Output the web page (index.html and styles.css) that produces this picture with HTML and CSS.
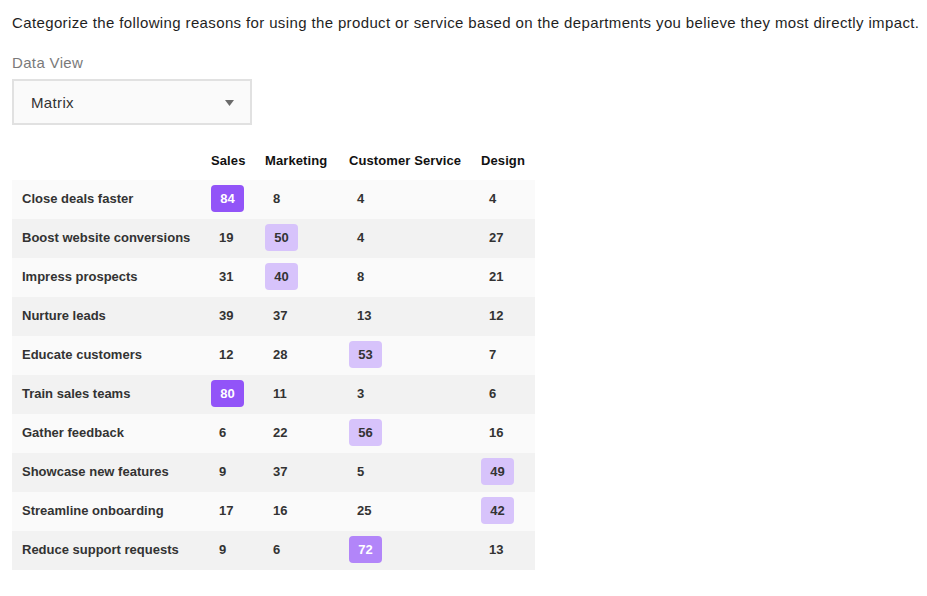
FILE: index.html
```html
<!DOCTYPE html>
<html>
<head>
<meta charset="utf-8">
<link rel="stylesheet" href="styles.css">
</head>
<body>
<div class="page">
  <p class="question">Categorize the following reasons for using the product or service based on the departments you believe they most directly impact.</p>
  <div class="field-label">Data View</div>
  <div class="select">
    <span>Matrix</span>
    <svg class="caret" width="9" height="6" viewBox="0 0 9 6"><path d="M0 0H9L4.5 6Z" fill="#6b6b6b"/></svg>
  </div>
  <div class="matrix">
    <div class="row head">
      <div class="c label"></div>
      <div class="c">Sales</div>
      <div class="c">Marketing</div>
      <div class="c">Customer Service</div>
      <div class="c">Design</div>
    </div>
    <div class="row">
      <div class="c label">Close deals faster</div>
      <div class="c"><span class="v hi">84</span></div>
      <div class="c"><span class="v">8</span></div>
      <div class="c"><span class="v">4</span></div>
      <div class="c"><span class="v">4</span></div>
    </div>
    <div class="row">
      <div class="c label">Boost website conversions</div>
      <div class="c"><span class="v">19</span></div>
      <div class="c"><span class="v lo">50</span></div>
      <div class="c"><span class="v">4</span></div>
      <div class="c"><span class="v">27</span></div>
    </div>
    <div class="row">
      <div class="c label">Impress prospects</div>
      <div class="c"><span class="v">31</span></div>
      <div class="c"><span class="v lo">40</span></div>
      <div class="c"><span class="v">8</span></div>
      <div class="c"><span class="v">21</span></div>
    </div>
    <div class="row">
      <div class="c label">Nurture leads</div>
      <div class="c"><span class="v">39</span></div>
      <div class="c"><span class="v">37</span></div>
      <div class="c"><span class="v">13</span></div>
      <div class="c"><span class="v">12</span></div>
    </div>
    <div class="row">
      <div class="c label">Educate customers</div>
      <div class="c"><span class="v">12</span></div>
      <div class="c"><span class="v">28</span></div>
      <div class="c"><span class="v lo">53</span></div>
      <div class="c"><span class="v">7</span></div>
    </div>
    <div class="row">
      <div class="c label">Train sales teams</div>
      <div class="c"><span class="v hi">80</span></div>
      <div class="c"><span class="v">11</span></div>
      <div class="c"><span class="v">3</span></div>
      <div class="c"><span class="v">6</span></div>
    </div>
    <div class="row">
      <div class="c label">Gather feedback</div>
      <div class="c"><span class="v">6</span></div>
      <div class="c"><span class="v">22</span></div>
      <div class="c"><span class="v lo">56</span></div>
      <div class="c"><span class="v">16</span></div>
    </div>
    <div class="row">
      <div class="c label">Showcase new features</div>
      <div class="c"><span class="v">9</span></div>
      <div class="c"><span class="v">37</span></div>
      <div class="c"><span class="v">5</span></div>
      <div class="c"><span class="v lo">49</span></div>
    </div>
    <div class="row">
      <div class="c label">Streamline onboarding</div>
      <div class="c"><span class="v">17</span></div>
      <div class="c"><span class="v">16</span></div>
      <div class="c"><span class="v">25</span></div>
      <div class="c"><span class="v lo">42</span></div>
    </div>
    <div class="row">
      <div class="c label">Reduce support requests</div>
      <div class="c"><span class="v">9</span></div>
      <div class="c"><span class="v">6</span></div>
      <div class="c"><span class="v mid">72</span></div>
      <div class="c"><span class="v">13</span></div>
    </div>
  </div>
</div>
</body>
</html>
```

FILE: styles.css
```css
* { box-sizing: border-box; }
body {
  margin: 0;
  background: #fff;
  font-family: "Liberation Sans", Arial, sans-serif;
  color: #222;
}
.page {
  padding: 12px 12px;
}
.question {
  margin: 0;
  font-size: 15px;
  line-height: 22px;
  letter-spacing: 0.37px;
  white-space: nowrap;
  color: #1f1f1f;
}
.field-label {
  margin-top: 19px;
  font-size: 15px;
  line-height: 20px;
  letter-spacing: 0.35px;
  color: #7a7a7a;
}
.select {
  margin-top: 6px;
  width: 240px;
  height: 46px;
  border: 2px solid #e1e1e1;
  background: #fafafa;
  display: flex;
  align-items: center;
  justify-content: space-between;
  padding: 0 16px 0 17px;
  font-size: 15px;
  letter-spacing: 0.35px;
  color: #333;
}
.caret { margin-top: 1px; }
.matrix {
  margin-top: 15px;
  width: 523px;
  display: flex;
  flex-direction: column;
}
.row {
  display: grid;
  grid-template-columns: 199px 54px 84px 132px 54px;
  height: 39px;
  align-items: center;
  font-size: 13px;
  font-weight: 700;
  color: #333;
  padding-bottom: 2px;
}
.row:nth-child(even) { background: #fafafa; }
.row:nth-child(odd) { background: #f2f2f2; }
.row.head {
  background: #fff;
  height: 40px;
  padding-bottom: 0;
  color: #111;
  letter-spacing: 0.1px;
}
.c { white-space: nowrap; }
.label { padding-left: 10px; }
.v {
  display: inline-block;
  min-width: 33px;
  height: 27px;
  line-height: 27px;
  padding: 0 8px;
  border-radius: 4px;
}
.v.hi, .v.mid, .v.lo { text-align: center; }
.v.hi { background: #9254f8; color: #fff; }
.v.mid { background: #b285f9; color: #fff; }
.v.lo { background: #d7c3fb; color: #333; }
```
